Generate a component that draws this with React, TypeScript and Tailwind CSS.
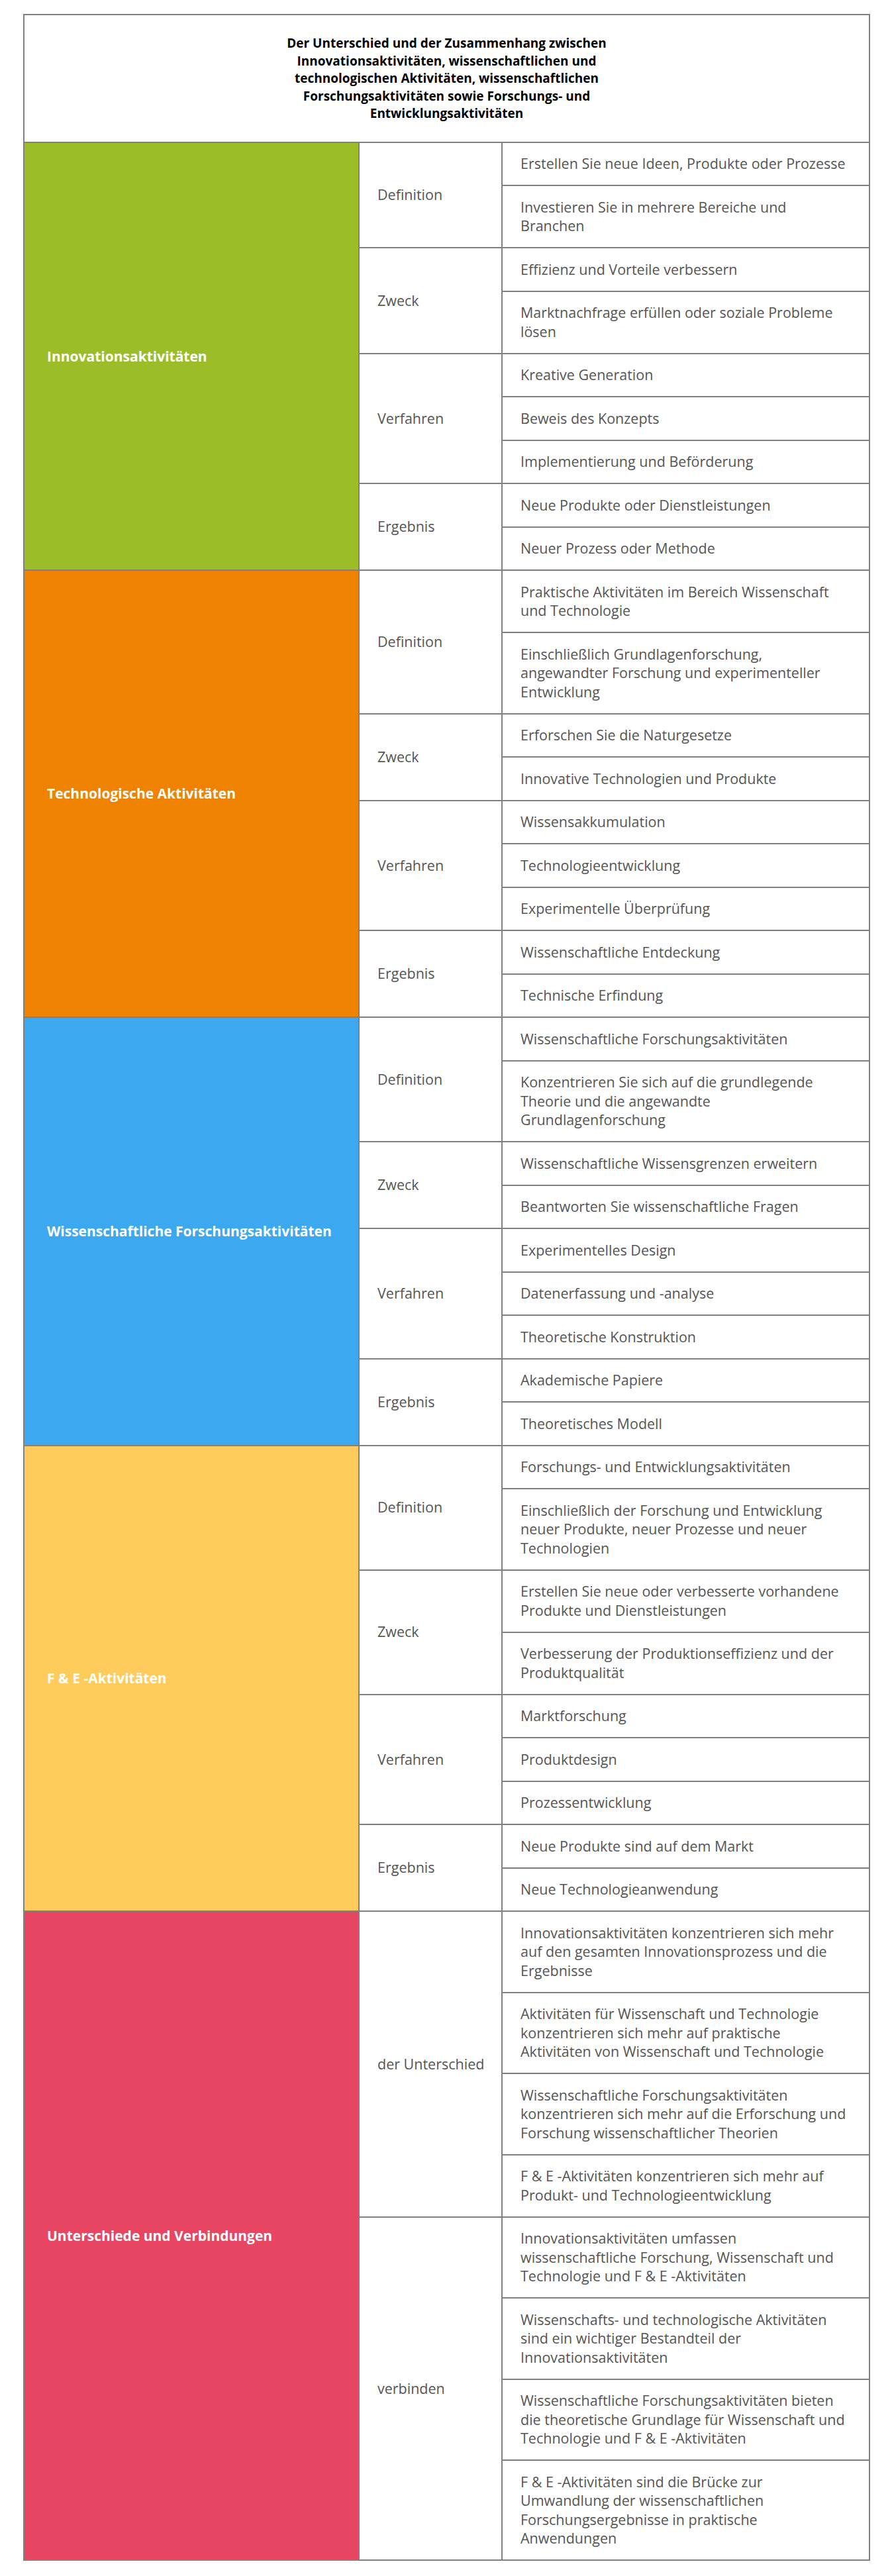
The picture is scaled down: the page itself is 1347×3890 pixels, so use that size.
import React from "react";

type Group = { label: string; items: string[] };
type Section = { title: string; bg: string; groups: Group[] };

const sections: Section[] = [
  {
    title: "Innovationsaktivitäten",
    bg: "bg-[#9bbe28]",
    groups: [
      {
        label: "Definition",
        items: [
          "Erstellen Sie neue Ideen, Produkte oder Prozesse",
          "Investieren Sie in mehrere Bereiche und Branchen",
        ],
      },
      {
        label: "Zweck",
        items: [
          "Effizienz und Vorteile verbessern",
          "Marktnachfrage erfüllen oder soziale Probleme lösen",
        ],
      },
      {
        label: "Verfahren",
        items: [
          "Kreative Generation",
          "Beweis des Konzepts",
          "Implementierung und Beförderung",
        ],
      },
      {
        label: "Ergebnis",
        items: ["Neue Produkte oder Dienstleistungen", "Neuer Prozess oder Methode"],
      },
    ],
  },
  {
    title: "Technologische Aktivitäten",
    bg: "bg-[#ef8200]",
    groups: [
      {
        label: "Definition",
        items: [
          "Praktische Aktivitäten im Bereich Wissenschaft und Technologie",
          "Einschließlich Grundlagenforschung, angewandter Forschung und experimenteller Entwicklung",
        ],
      },
      {
        label: "Zweck",
        items: ["Erforschen Sie die Naturgesetze", "Innovative Technologien und Produkte"],
      },
      {
        label: "Verfahren",
        items: [
          "Wissensakkumulation",
          "Technologieentwicklung",
          "Experimentelle Überprüfung",
        ],
      },
      {
        label: "Ergebnis",
        items: ["Wissenschaftliche Entdeckung", "Technische Erfindung"],
      },
    ],
  },
  {
    title: "Wissenschaftliche Forschungsaktivitäten",
    bg: "bg-[#3ca8ef]",
    groups: [
      {
        label: "Definition",
        items: [
          "Wissenschaftliche Forschungsaktivitäten",
          "Konzentrieren Sie sich auf die grundlegende Theorie und die angewandte Grundlagenforschung",
        ],
      },
      {
        label: "Zweck",
        items: [
          "Wissenschaftliche Wissensgrenzen erweitern",
          "Beantworten Sie wissenschaftliche Fragen",
        ],
      },
      {
        label: "Verfahren",
        items: [
          "Experimentelles Design",
          "Datenerfassung und -analyse",
          "Theoretische Konstruktion",
        ],
      },
      {
        label: "Ergebnis",
        items: ["Akademische Papiere", "Theoretisches Modell"],
      },
    ],
  },
  {
    title: "F & E -Aktivitäten",
    bg: "bg-[#fecb5c]",
    groups: [
      {
        label: "Definition",
        items: [
          "Forschungs- und Entwicklungsaktivitäten",
          "Einschließlich der Forschung und Entwicklung neuer Produkte, neuer Prozesse und neuer Technologien",
        ],
      },
      {
        label: "Zweck",
        items: [
          "Erstellen Sie neue oder verbesserte vorhandene Produkte und Dienstleistungen",
          "Verbesserung der Produktionseffizienz und der Produktqualität",
        ],
      },
      {
        label: "Verfahren",
        items: ["Marktforschung", "Produktdesign", "Prozessentwicklung"],
      },
      {
        label: "Ergebnis",
        items: ["Neue Produkte sind auf dem Markt", "Neue Technologieanwendung"],
      },
    ],
  },
  {
    title: "Unterschiede und Verbindungen",
    bg: "bg-[#e84563]",
    groups: [
      {
        label: "der Unterschied",
        items: [
          "Innovationsaktivitäten konzentrieren sich mehr auf den gesamten Innovationsprozess und die Ergebnisse",
          "Aktivitäten für Wissenschaft und Technologie konzentrieren sich mehr auf praktische Aktivitäten von Wissenschaft und Technologie",
          "Wissenschaftliche Forschungsaktivitäten konzentrieren sich mehr auf die Erforschung und Forschung wissenschaftlicher Theorien",
          "F & E -Aktivitäten konzentrieren sich mehr auf Produkt- und Technologieentwicklung",
        ],
      },
      {
        label: "verbinden",
        items: [
          "Innovationsaktivitäten umfassen wissenschaftliche Forschung, Wissenschaft und Technologie und F & E -Aktivitäten",
          "Wissenschafts- und technologische Aktivitäten sind ein wichtiger Bestandteil der Innovationsaktivitäten",
          "Wissenschaftliche Forschungsaktivitäten bieten die theoretische Grundlage für Wissenschaft und Technologie und F & E -Aktivitäten",
          "F & E -Aktivitäten sind die Brücke zur Umwandlung der wissenschaftlichen Forschungsergebnisse in praktische Anwendungen",
        ],
      },
    ],
  },
];

export default function App() {
  const rows: React.ReactNode[] = [];
  sections.forEach((s, si) => {
    const total = s.groups.reduce((n, g) => n + g.items.length, 0);
    s.groups.forEach((g, gi) => {
      g.items.forEach((it, ii) => {
        rows.push(
          <tr key={`${si}-${gi}-${ii}`}>
            {gi === 0 && ii === 0 && (
              <td
                rowSpan={total}
                className={`${s.bg} border-2 border-[#808080] pl-[34px] pr-4 align-middle text-[21px] font-bold leading-[28.5px] text-white`}
              >
                {s.title}
              </td>
            )}
            {ii === 0 && (
              <td
                rowSpan={g.items.length}
                className="whitespace-nowrap border-2 border-[#808080] bg-white pl-[27px] pr-2 align-middle text-[21.5px] leading-[28.5px] text-[#555555]"
              >
                {g.label}
              </td>
            )}
            <td className="border-2 border-[#808080] bg-white px-[27px] py-[17.5px] align-middle text-[21.5px] leading-[28.5px] text-[#555555]">
              {it}
            </td>
          </tr>
        );
      });
    });
  });

  return (
    <div className="min-h-[3890px] bg-white px-[35px] pt-[21px] font-['Open_Sans','Noto_Sans',sans-serif]">
      <table className="w-[1277px] table-fixed border-collapse">
        <colgroup>
          <col className="w-[506px]" />
          <col className="w-[216px]" />
          <col className="w-[555px]" />
        </colgroup>
        <tbody>
          <tr>
            <td
              colSpan={3}
              className="border-2 border-[#808080] bg-white py-[29px] text-center"
            >
              <div className="mx-auto max-w-[540px] text-[19px] font-bold leading-[26.5px] text-black">
                Der Unterschied und der Zusammenhang zwischen Innovationsaktivitäten,
                wissenschaftlichen und technologischen Aktivitäten, wissenschaftlichen
                Forschungsaktivitäten sowie Forschungs- und Entwicklungsaktivitäten
              </div>
            </td>
          </tr>
          {rows}
        </tbody>
      </table>
    </div>
  );
}
